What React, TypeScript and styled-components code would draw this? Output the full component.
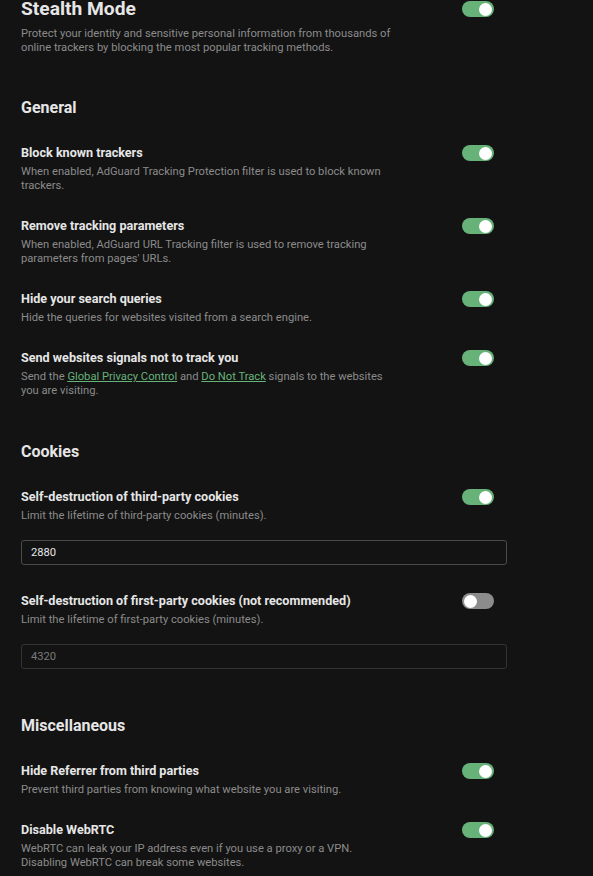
import React from "react";
import styled, { createGlobalStyle } from "styled-components";

const Global = createGlobalStyle`
  html, body { margin: 0; padding: 0; background: #131313; }
  body { font-family: Roboto, "Noto Sans", Arial, sans-serif; -webkit-font-smoothing: antialiased; }
`;

const Page = styled.div`
  width: 593px;
  height: 876px;
  overflow: hidden;
  background: #131313;
  box-sizing: border-box;
  padding: 0 86px 0 21px;
`;

const Inner = styled.div`
  margin-top: -5px;
`;

const Row = styled.div`
  display: grid;
  grid-template-columns: 1fr 32px 13px;
  column-gap: 0;
  align-items: center;
`;

const PageTitle = styled.h1`
  margin: 0;
  font-size: 19.2px;
  line-height: 28px;
  font-weight: 700;
  color: #e6e6e6;
`;

const Desc = styled.p`
  grid-column: 1 / 2;
  margin: 3px 0 0;
  font-size: 11.2px;
  line-height: 14px;
  color: #8b8b8b;
  max-width: 372px;
`;

const HeaderDesc = styled(Desc)`
  margin-top: 4px;
`;

const Section = styled.section`
  display: flex;
  flex-direction: column;
  margin-top: 44px;

  &:first-of-type {
    margin-top: 43px;
  }
`;

const SectionTitle = styled.h2`
  margin: 0 0 26px;
  font-size: 16px;
  line-height: 20px;
  font-weight: 700;
  color: #e6e6e6;
`;

const Items = styled.div`
  display: flex;
  flex-direction: column;
  gap: 24px;
`;

const ItemTitle = styled.div`
  font-size: 12.6px;
  line-height: 18px;
  font-weight: 700;
  color: #e6e6e6;
`;

const Track = styled.span<{ $on: boolean }>`
  position: relative;
  display: inline-block;
  width: 32px;
  height: 16px;
  border-radius: 8px;
  background: ${(p) => (p.$on ? "#67b279" : "#8c8c8c")};
`;

const Knob = styled.span<{ $on: boolean }>`
  position: absolute;
  top: 1.5px;
  ${(p) => (p.$on ? "right: 2px;" : "left: 2px;")}
  width: 13px;
  height: 13px;
  border-radius: 50%;
  background: #ffffff;
`;

const Link = styled.a`
  color: #67b279;
  text-decoration: underline;
  text-underline-offset: 1px;
`;

const InputBox = styled.input<{ $disabled?: boolean }>`
  grid-column: 1 / 4;
  margin: 17px 0 3px;
  box-sizing: border-box;
  width: 100%;
  height: 25px;
  padding: 0 9px;
  background: transparent;
  border: 1px solid ${(p) => (p.$disabled ? "#333333" : "#4a4a4a")};
  border-radius: 3px;
  font-family: inherit;
  font-size: 11.2px;
  color: ${(p) => (p.$disabled ? "#7a7a7a" : "#e6e6e6")};
  outline: none;
`;

const Toggle = ({ on }: { on: boolean }) => (
  <Track $on={on}>
    <Knob $on={on} />
  </Track>
);

type ItemProps = {
  title: string;
  desc: React.ReactNode;
  on?: boolean;
  input?: { value: string; disabled?: boolean };
};

const Setting = ({ title, desc, on = true, input }: ItemProps) => (
  <Row>
    <ItemTitle>{title}</ItemTitle>
    <Toggle on={on} />
    <span />
    <Desc>{desc}</Desc>
    {input && (
      <InputBox
        $disabled={input.disabled}
        defaultValue={input.value}
        disabled={input.disabled}
      />
    )}
  </Row>
);

export default function App() {
  return (
    <>
      <Global />
      <Page>
        <Inner>
          <Row>
            <PageTitle>Stealth Mode</PageTitle>
            <Toggle on />
            <span />
            <HeaderDesc>
              Protect your identity and sensitive personal information from thousands of
              online trackers by blocking the most popular tracking methods.
            </HeaderDesc>
          </Row>

          <Section>
            <SectionTitle>General</SectionTitle>
            <Items>
              <Setting
                title="Block known trackers"
                desc="When enabled, AdGuard Tracking Protection filter is used to block known trackers."
              />
              <Setting
                title="Remove tracking parameters"
                desc="When enabled, AdGuard URL Tracking filter is used to remove tracking parameters from pages' URLs."
              />
              <Setting
                title="Hide your search queries"
                desc="Hide the queries for websites visited from a search engine."
              />
              <Setting
                title="Send websites signals not to track you"
                desc={
                  <>
                    Send the <Link href="#">Global Privacy Control</Link> and{" "}
                    <Link href="#">Do Not Track</Link> signals to the websites you are visiting.
                  </>
                }
              />
            </Items>
          </Section>

          <Section>
            <SectionTitle>Cookies</SectionTitle>
            <Items>
              <Setting
                title="Self-destruction of third-party cookies"
                desc="Limit the lifetime of third-party cookies (minutes)."
                input={{ value: "2880" }}
              />
              <Setting
                title="Self-destruction of first-party cookies (not recommended)"
                desc="Limit the lifetime of first-party cookies (minutes)."
                on={false}
                input={{ value: "4320", disabled: true }}
              />
            </Items>
          </Section>

          <Section>
            <SectionTitle>Miscellaneous</SectionTitle>
            <Items>
              <Setting
                title="Hide Referrer from third parties"
                desc="Prevent third parties from knowing what website you are visiting."
              />
              <Setting
                title="Disable WebRTC"
                desc="WebRTC can leak your IP address even if you use a proxy or a VPN. Disabling WebRTC can break some websites."
              />
            </Items>
          </Section>
        </Inner>
      </Page>
    </>
  );
}
